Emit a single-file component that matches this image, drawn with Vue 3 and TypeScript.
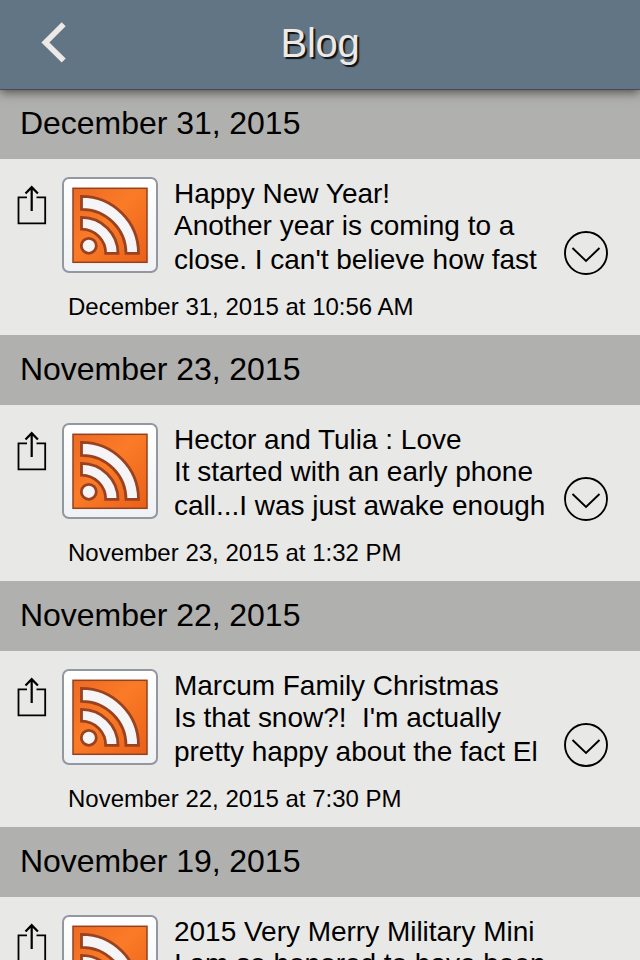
<script setup lang="ts">
interface Post {
  day: string
  title: string
  lines: string[]
  time?: string
}

const posts: Post[] = [
  {
    day: 'December 31, 2015',
    title: 'Happy New Year!',
    lines: ['Another year is coming to a', "close. I can't believe how fast"],
    time: 'December 31, 2015 at 10:56 AM',
  },
  {
    day: 'November 23, 2015',
    title: 'Hector and Tulia : Love',
    lines: ['It started with an early phone', 'call...I was just awake enough'],
    time: 'November 23, 2015 at 1:32 PM',
  },
  {
    day: 'November 22, 2015',
    title: 'Marcum Family Christmas',
    lines: ["Is that snow?!  I'm actually", 'pretty happy about the fact El'],
    time: 'November 22, 2015 at 7:30 PM',
  },
  {
    day: 'November 19, 2015',
    title: '2015 Very Merry Military Mini',
    lines: ['I am so honored to have been'],
  },
]
</script>

<template>
  <div class="screen">
    <header class="nav">
      <button class="back" aria-label="Back">
        <svg width="28" height="44" viewBox="0 0 28 44">
          <path d="M23.7 4.200 L5.400 22.400 L23.700 40.600" fill="none" stroke="#ece9e6" stroke-width="5.600" />
        </svg>
      </button>
      <h1 class="title">Blog</h1>
    </header>
    <main class="feed">
      <section v-for="post in posts" :key="post.day">
        <h2 class="day">{{ post.day }}</h2>
        <article class="post">
          <div class="summary">
            <svg class="share" width="31" height="41" viewBox="0 0 31 41">
              <g fill="none" stroke="#000" stroke-width="1.800">
                <path d="M11 12.300 H2.500 V38.300 H29.200 V12.300 H20.500" />
                <path d="M15.700 26 V2.500 M9.500 8.600 L15.700 2.200 L21.900 8.600" stroke-width="2.200" />
              </g>
            </svg>
            <svg class="thumb" width="96" height="96" viewBox="0 0 96 96">
              <defs>
                <linearGradient id="orange" x1="0" y1="0" x2="1" y2="1">
                  <stop offset="0" stop-color="#ed6a24" />
                  <stop offset="0.450" stop-color="#fa7b27" />
                  <stop offset="1" stop-color="#e96019" />
                </linearGradient>
                <linearGradient id="frame" x1="0" y1="0" x2="0" y2="1">
                  <stop offset="0" stop-color="#ffffff" />
                  <stop offset="1" stop-color="#f0f1f4" />
                </linearGradient>
              </defs>
              <rect x="1" y="1" width="94" height="94" rx="6" fill="url(#frame)" stroke="#9297a0" stroke-width="2" />
              <rect x="11" y="11.300" width="74" height="74" fill="url(#orange)" stroke="#93421f" stroke-width="1.500" />
              <g fill="#f5f5f8" stroke="#9a4220" stroke-width="2.800">
                <path d="M19.500 19.400 A57 57 0 0 1 76.500 76.400 H64.000 A44.500 44 0 0 0 19.500 32.400 Z" />
                <path d="M19.500 40.400 A36.500 36 0 0 1 56 76.400 H43.700 A24.200 24.200 0 0 0 19.500 52.200 Z" />
                <circle cx="26.800" cy="68.800" r="7.500" />
              </g>
            </svg>
            <div class="text">
              <h3 class="heading">{{ post.title }}</h3>
              <p v-for="(line, i) in post.lines" :key="i" class="line">{{ line }}</p>
            </div>
            <svg class="more" width="46" height="46" viewBox="0 0 46 46">
              <g fill="none" stroke="#000" stroke-width="1.900">
                <circle cx="23" cy="23" r="21" />
                <path d="M9.500 18 L23 31 L36.500 18" />
              </g>
            </svg>
          </div>
          <p v-if="post.time" class="time">{{ post.time }}</p>
        </article>
      </section>
    </main>
  </div>
</template>

<style>
body {
  margin: 0;
  overflow: hidden;
}
</style>

<style scoped>
.screen {
  display: flex;
  flex-direction: column;
  width: 640px;
  height: 960px;
  overflow: hidden;
  background: #e8e8e7;
  color: #000;
  font-family: "Liberation Sans", Arial, sans-serif;
}
h1, h2, h3, p {
  margin: 0;
  font-weight: 400;
}
.nav {
  display: grid;
  grid-template-columns: 100px 1fr 100px;
  flex: none;
  height: 90px;
  box-sizing: border-box;
  border-bottom: 1px solid #454c54;
  background: #617585;
  box-shadow: 0 2px 10px rgba(45, 35, 30, 0.75);
  z-index: 1;
}
.back {
  display: flex;
  align-items: flex-start;
  padding: 20px 0 0 40px;
  border: 0;
  background: none;
}
.title {
  font-size: 40px;
  line-height: 87px;
  letter-spacing: -0.3px;
  text-align: center;
  color: #ece9e6;
  text-shadow: 2px 2px 1px #111;
}
.feed {
  flex: 1;
  min-height: 0;
  margin-top: -1px;
  overflow: hidden;
}
.day {
  height: 70px;
  padding-left: 20px;
  background: #b0b0ae;
  font-size: 32px;
  line-height: 68px;
  letter-spacing: -0.04px;
}
.post {
  height: 176px;
  box-sizing: border-box;
  padding-top: 18px;
}
.summary {
  display: grid;
  grid-template-columns: 46px 96px 373px 46px;
  height: 104px;
  padding-left: 16px;
}
.share {
  margin-top: 8px;
}
.text {
  padding-left: 16px;
  white-space: pre;
}
.heading,
.line {
  height: 33px;
  font-size: 28px;
  line-height: 33px;
  letter-spacing: -0.02px;
}
.heading {
  height: 32px;
}
.line:nth-child(3) {
  height: 34px;
  line-height: 35px;
}
.more {
  margin: 53px 0 0 32px;
}
.time {
  padding-left: 68px;
  font-size: 24px;
  line-height: 52px;
}
</style>
